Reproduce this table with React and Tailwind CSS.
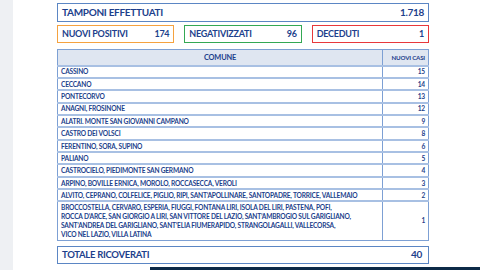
import React from 'react'

const rows = [
  ['CASSINO', 15],
  ['CECCANO', 14],
  ['PONTECORVO', 13],
  ['ANAGNI, FROSINONE', 12],
  ['ALATRI. MONTE SAN GIOVANNI CAMPANO', 9],
  ['CASTRO DEI VOLSCI', 8],
  ['FERENTINO, SORA, SUPINO', 6],
  ['PALIANO', 5],
  ['CASTROCIELO, PIEDIMONTE SAN GERMANO', 4],
  ['ARPINO, BOVILLE ERNICA, MOROLO, ROCCASECCA, VEROLI', 3],
  ['ALVITO, CEPRANO, COLFELICE, PIGLIO, RIPI, SANT’APOLLINARE, SANTOPADRE, TORRICE, VALLEMAIO', 2],
]

const lastRow = [
  'BROCCOSTELLA, CERVARO, ESPERIA, FIUGGI, FONTANA LIRI, ISOLA DEL LIRI, PASTENA, POFI,',
  'ROCCA D’ARCE, SAN GIORGIO A LIRI, SAN VITTORE DEL LAZIO, SANT’AMBROGIO SUL GARIGLIANO,',
  'SANT’ANDREA DEL GARIGLIANO, SANT’ELIA FIUMERAPIDO, STRANGOLAGALLI, VALLECORSA,',
  'VICO NEL LAZIO, VILLA LATINA',
]

const font = { fontFamily: 'Lato, "Liberation Sans", Arial, sans-serif' }

const StatBox = ({ label, value, border }) => (
  <div className={`flex h-[18px] flex-1 items-center justify-between border-[1.5px] ${border} px-[4px] text-[9px] font-bold tracking-[-0.25px]`}>
    <span>{label}</span>
    <span>{value}</span>
  </div>
)

export default function App() {
  return (
    <div className="flex h-[270px] w-[480px] overflow-hidden bg-white text-[#1d3f8c]" style={font}>
      <div className="w-[13px] shrink-0 bg-[#eef0f3]" />
      <div className="relative flex-1 pl-[44px] pt-[3px]">
        <div className="w-[372px]">
          <div className="flex h-[19px] items-center justify-between border-[1.5px] border-[#5b86c4] px-[4px] text-[10px] font-bold tracking-[-0.3px]">
            <span>TAMPONI EFFETTUATI</span>
            <span>1.718</span>
          </div>

          <div className="mt-[3px] flex gap-[10px]">
            <StatBox label="NUOVI POSITIVI" value="174" border="border-[#f5a23f]" />
            <StatBox label="NEGATIVIZZATI" value="96" border="border-[#34a853]" />
            <StatBox label="DECEDUTI" value="1" border="border-[#e8383b]" />
          </div>

          <table className="mt-[6px] w-full border-collapse border border-[#7da0d4] text-[6.6px] font-bold tracking-[-0.2px]">
            <thead>
              <tr className="h-[16px] bg-[#dfe6f1]">
                <th className="border border-[#7da0d4] text-[7.4px]">COMUNE</th>
                <th className="w-[46px] border border-[#7da0d4] text-right pr-[3px] text-[6.2px]">NUOVI CASI</th>
              </tr>
            </thead>
            <tbody>
              {rows.map(([name, n]) => (
                <tr key={name} className="h-[12.36px]">
                  <td className="whitespace-nowrap border-y-2 border-x border-y-[#a8c0e3] border-x-[#7da0d4] pl-[3px] leading-none">{name}</td>
                  <td className="border-y-2 border-x border-y-[#a8c0e3] border-x-[#7da0d4] pr-[3px] text-right leading-none">{n}</td>
                </tr>
              ))}
              <tr className="h-[39px]">
                <td className="whitespace-nowrap border border-[#7da0d4] pl-[3px] leading-[9.2px]">
                  {lastRow.map((l) => (
                    <div key={l}>{l}</div>
                  ))}
                </td>
                <td className="border border-[#7da0d4] pr-[3px] text-right">1</td>
              </tr>
            </tbody>
          </table>

          <div className="mt-[5px] flex h-[18px] items-center justify-between border-[1.5px] border-[#5b86c4] px-[4px] text-[9.5px] font-bold tracking-[-0.3px]">
            <span>TOTALE RICOVERATI</span>
            <span className="pr-[2px] text-[10px]">40</span>
          </div>
        </div>
        <div className="absolute bottom-0 right-0 h-[3px] w-[330px] bg-[#0d2a47]" />
      </div>
    </div>
  )
}
